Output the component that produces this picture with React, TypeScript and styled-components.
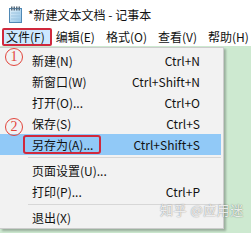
import * as React from "react";
import styled, {createGlobalStyle} from "styled-components";

const GlobalStyle = createGlobalStyle`
    html, body {
        margin: 0;
        padding: 0;
        background: #ffffff;
        overflow: hidden;
    }
`;

const FONT = `"Noto Sans CJK SC", "Noto Sans", sans-serif`;

const Window = styled.div`
    position: relative;
    width: 251px;
    height: 233px;
    display: flex;
    flex-direction: column;
    font-family: ${FONT};
    color: #111;
    overflow: hidden;
`;

const TitleBar = styled.div`
    height: 28px;
    flex: none;
    display: flex;
    align-items: center;
    gap: 5px;
    padding-left: 8px;
    font-size: 12px;
    white-space: nowrap;
    background: #fff;
`;

const MenuBar = styled.div`
    height: 18px;
    flex: none;
    display: flex;
    align-items: stretch;
    padding-left: 2px;
    font-size: 12px;
    line-height: 14px;
    white-space: nowrap;
    background: #fff;
`;

const MenuBarItem = styled.div<{ $active?: boolean }>`
    display: flex;
    align-items: center;
    box-sizing: border-box;
    padding: 0 5px 0 2px;
    border: 2px solid ${p => p.$active ? "#d0283c" : "transparent"};
    border-radius: 2px;
    background: ${p => p.$active ? "#cce8ff" : "transparent"};
`;

const EditArea = styled.div`
    flex: 1;
    background: #cde9d0;
`;

const Dropdown = styled.div`
    position: absolute;
    top: 47px;
    left: 0;
    width: 224px;
    height: 182px;
    box-sizing: border-box;
    padding: 2px 0 0;
    background: #f2f2f2;
    border: 1px solid #cccccc;
    border-left: none;
    box-shadow: 2px 2px 2px rgba(0, 0, 0, 0.25);
    font-size: 12px;
    white-space: nowrap;
`;

const MenuRow = styled.div<{ $hover?: boolean }>`
    display: grid;
    grid-template-columns: 1fr auto;
    align-items: center;
    height: 21px;
    padding: 0 21px 0 23px;
    margin-right: 2px;
    background: ${p => p.$hover ? "#91c9f7" : "transparent"};
`;

const Label = styled.span<{ $marked?: boolean }>`
    justify-self: start;
    padding: 0 6px 0 7px;
    line-height: 15px;
    border: 2px solid ${p => p.$marked ? "#d0283c" : "transparent"};
    border-radius: 3px;
`;

const Shortcut = styled.span`
    text-align: right;
`;

const Separator = styled.div`
    height: 1px;
    margin: 2px 2px 2px 28px;
    background: #d7d7d7;
`;

const Badge = styled.div<{ $top: number }>`
    position: absolute;
    left: 5px;
    top: ${p => p.$top}px;
    width: 16px;
    height: 16px;
    border: 1.5px solid #e2453c;
    border-radius: 50%;
    color: #e2453c;
    font-family: "Liberation Serif", serif;
    font-size: 14px;
    line-height: 16px;
    text-align: center;
`;

const Watermark = styled.div`
    position: absolute;
    left: 160px;
    top: 202px;
    font-size: 13px;
    line-height: 15px;
    color: rgba(255, 255, 255, 0.85);
    text-shadow: 0 0 1px rgba(0, 0, 0, 0.4), 0 0 2px rgba(0, 0, 0, 0.2);
    letter-spacing: 0.5px;
    white-space: nowrap;
`;

const NotepadIcon = () => (
    <svg width="15" height="17" viewBox="0 0 15 17">
        <defs>
            <linearGradient id="pg" x1="0" y1="0" x2="1" y2="1">
                <stop offset="0" stopColor="#e4f2fb"/>
                <stop offset="1" stopColor="#8fc2e6"/>
            </linearGradient>
        </defs>
        <rect x="1.5" y="2.5" width="12" height="14" fill="url(#pg)" stroke="#4f88b5"/>
        <line x1="3" y1="7" x2="12" y2="7" stroke="#9cc4df"/>
        <line x1="3" y1="10" x2="12" y2="10" stroke="#9cc4df"/>
        <line x1="3" y1="13" x2="12" y2="13" stroke="#9cc4df"/>
        {[3, 5.5, 8, 10.5].map(x =>
            <rect key={x} x={x} y="0.5" width="1.5" height="4" fill="#5a6d7d"/>
        )}
    </svg>
);

const menuBar = ["文件(F)", "编辑(E)", "格式(O)", "查看(V)", "帮助(H)"];

interface Entry {
    label?: string
    shortcut?: string
    hover?: boolean
}

const entries: Entry[] = [
    {label: "新建(N)", shortcut: "Ctrl+N"},
    {label: "新窗口(W)", shortcut: "Ctrl+Shift+N"},
    {label: "打开(O)...", shortcut: "Ctrl+O"},
    {label: "保存(S)", shortcut: "Ctrl+S"},
    {label: "另存为(A)...", shortcut: "Ctrl+Shift+S", hover: true},
    {},
    {label: "页面设置(U)..."},
    {label: "打印(P)...", shortcut: "Ctrl+P"},
    {},
    {label: "退出(X)"},
];

export default function App() {
    return <Window>
        <GlobalStyle/>
        <TitleBar>
            <NotepadIcon/>
            <span>*新建文本文档 - 记事本</span>
        </TitleBar>
        <MenuBar>
            {menuBar.map((m, i) => <MenuBarItem key={m} $active={i === 0}>{m}</MenuBarItem>)}
        </MenuBar>
        <EditArea/>
        <Dropdown>
            {entries.map((e, i) => e.label
                ? <MenuRow key={i} $hover={e.hover}>
                    <Label $marked={e.hover}>{e.label}</Label>
                    <Shortcut>{e.shortcut}</Shortcut>
                </MenuRow>
                : <Separator key={i}/>
            )}
        </Dropdown>
        <Badge $top={48}>1</Badge>
        <Badge $top={118}>2</Badge>
        <Watermark>知乎 @应用迷</Watermark>
    </Window>;
}
